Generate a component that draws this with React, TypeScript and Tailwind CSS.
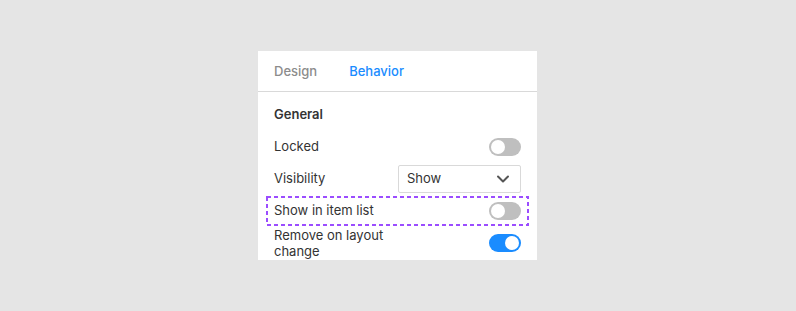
import React, { useState } from 'react';
import { ChevronDown } from 'lucide-react';

const Toggle: React.FC<{ on: boolean; onChange: () => void }> = ({ on, onChange }) => (
  <button
    type="button"
    onClick={onChange}
    className={`relative flex h-[18px] w-8 shrink-0 items-center rounded-full px-[2px] ${
      on ? 'justify-end bg-[#1a8cff]' : 'justify-start bg-[#bfbfbf]'
    }`}
  >
    <span className="h-[14px] w-[14px] rounded-full bg-white" />
  </button>
);

export default function App() {
  const [tab, setTab] = useState<'design' | 'behavior'>('behavior');
  const [locked, setLocked] = useState(false);
  const [showInList, setShowInList] = useState(false);
  const [removeOnChange, setRemoveOnChange] = useState(true);

  return (
    <div
      className="h-[311px] w-full overflow-hidden bg-[#e5e5e5] pt-[51px] pl-[258px]"
      style={{ fontFamily: 'Inter, "Noto Sans", sans-serif' }}
    >
      <div className="h-[209px] w-[279px] overflow-hidden bg-white text-[13px] text-[#333333]">
        <div className="flex h-[41px] items-center gap-8 border-b border-[#d9d9d9] px-4 pt-px text-[13px] font-medium">
          <button
            type="button"
            onClick={() => setTab('design')}
            className={tab === 'design' ? 'text-[#1a8cff]' : 'text-[#8c8c8c]'}
          >
            Design
          </button>
          <button
            type="button"
            onClick={() => setTab('behavior')}
            className={tab === 'behavior' ? 'text-[#1a8cff]' : 'text-[#8c8c8c]'}
          >
            Behavior
          </button>
        </div>

        <div className="px-4 pt-3">
          <div className="h-5 leading-5 font-semibold">General</div>

          <div className="mt-[11px] flex h-6 items-center justify-between">
            <span>Locked</span>
            <Toggle on={locked} onChange={() => setLocked(!locked)} />
          </div>

          <div className="mt-[6px] flex h-7 items-center justify-between">
            <span>Visibility</span>
            <div className="flex h-7 w-[123px] items-center justify-between rounded-[2px] border border-[#d9d9d9] pr-[7px] pl-2">
              <span>Show</span>
              <ChevronDown size={20} strokeWidth={2.4} className="text-[#555555]" />
            </div>
          </div>

          <div className="relative -mx-2 mt-[3px] flex h-[30px] items-center justify-between px-2">
            <span>Show in item list</span>
            <Toggle on={showInList} onChange={() => setShowInList(!showInList)} />
            <svg className="pointer-events-none absolute inset-0 h-full w-full">
              <rect
                x="1"
                y="1"
                width="calc(100% - 2px)"
                height="calc(100% - 2px)"
                fill="none"
                stroke="#9b4dff"
                strokeWidth="2"
                strokeDasharray="4 3"
              />
            </svg>
          </div>

          <div className="mt-px flex items-center justify-between">
            <span className="w-[120px] leading-4">Remove on layout change</span>
            <Toggle on={removeOnChange} onChange={() => setRemoveOnChange(!removeOnChange)} />
          </div>
        </div>
      </div>
    </div>
  );
}
